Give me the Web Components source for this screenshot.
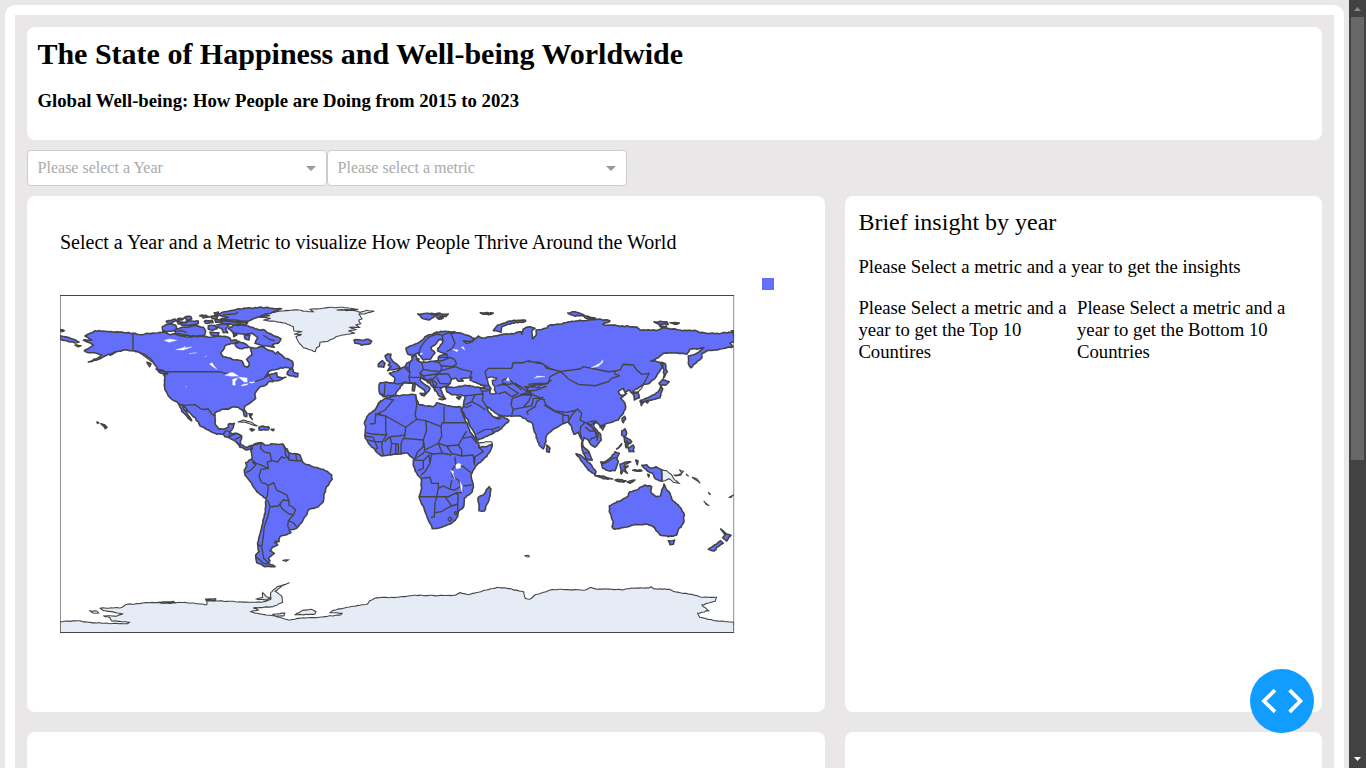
<!DOCTYPE html>
<html lang="en">
<head>
<meta charset="utf-8">
<title>The State of Happiness and Well-being Worldwide</title>
<style>
html, body { margin: 0; height: 100%; overflow: hidden; }
body { font-family: "Liberation Serif", "Times New Roman", serif; color: #000; background: #e9e7e8; }
</style>
</head>
<body>
<dash-app></dash-app>
<script>
function define(name, html, setup) {
  const tpl = document.createElement('template');
  tpl.innerHTML = html;
  customElements.define(name, class extends HTMLElement {
    constructor() {
      super();
      this.attachShadow({ mode: 'open' }).append(tpl.content.cloneNode(true));
    }
    connectedCallback() { if (setup) setup(this.shadowRoot, this); }
  });
}

define('page-card', `<style>
:host { display: block; box-sizing: border-box; background: #fff; border-radius: 8px; min-width: 0; }
</style><slot></slot>`);

define('page-header', `<style>
:host { display: block; height: 113px; }
page-card { height: 100%; padding: 10px 10.4px; }
h1 { margin: 0; font-size: 30px; line-height: 34px; }
h3 { margin: 19px 0 0; font-size: 18.72px; line-height: 22px; }
</style><page-card><h1><slot name="title"></slot></h1><h3><slot></slot></h3></page-card>`);

define('drop-down', `<style>
:host { display: flex; box-sizing: border-box; width: 300px; height: 36px; border: 1px solid #ccc; border-radius: 4px; background: #fff; color: #aaa; font-size: 16px; line-height: 34px; padding: 0 10px 0 9.6px; justify-content: space-between; align-items: center; }
i { border: 5px solid transparent; border-top-color: #999; border-bottom: 0; margin-top: 1px; }
</style><span><slot></slot></span><i></i>`);

define('insight-panel', `<style>
:host { display: block; font-size: 18.72px; line-height: 22px; }
page-card { height: 100%; padding: 12px 13.4px; }
h2 { font-size: 24px; line-height: 28px; font-weight: 400; margin: 0 0 20px; }
p { margin: 0; }
.cols { display: grid; grid-template-columns: 211px 214px; column-gap: 7.6px; margin-top: 19px; }
</style><page-card><h2>Brief insight by year</h2><p>Please Select a metric and a year to get the insights</p>
<div class="cols"><p>Please Select a metric and a year to get the Top 10 Countires</p><p>Please Select a metric and a year to get the Bottom 10 Countries</p></div></page-card>`);

define('map-panel', `<style>
:host { display: block; }
page-card { height: 100%; padding: 35px 33px 0; }
.title { font-size: 20px; line-height: 23px; white-space: nowrap; }
.plot { display: flex; margin-top: 23px; gap: 26.5px; }
world-map { margin-top: 18px; }
.key { width: 12.5px; height: 12.5px; background: #636efa; margin-top: .5px; }
</style><page-card><div class="title">Select a Year and a Metric to visualize How People Thrive Around the World</div>
<div class="plot"><world-map></world-map><div class="key"></div></div></page-card>`);

/* Survey sheets: every point is given on a local grid and moved to map space by its sheet's origin. */
const SHEET = { a: [55, 290, 3, 3], b: [215, 430, 3, 3], c: [355, 300, 3, 3], d: [355, 400, 3, 3], e: [500, 305, 3, 3], f: [550, 410, 3, 3], g: [55, 570, 2.272, 3], h: [155, 298, 3, 3], k: [250, 295, 3, 3] };
let seed = 11;
const rnd = () => ((seed = (seed * 16807) % 2147483647) / 2147483647) - 0.5;
function trace(src, closed, rough) {
  let s, pts = [];
  for (const t of src.trim().split(/\s+/)) {
    if (SHEET[t]) { s = SHEET[t]; continue; }
    const [x, y] = t.split(',').map(Number);
    pts.push([s[0] + x / s[2], s[1] + y / s[3]]);
  }
  if (closed) pts.push(pts[0]);
  let out = 'M' + pts[0].map(v => v.toFixed(1)).join();
  for (let i = 1; i < pts.length; i++) {
    const [p, q] = [pts[i - 1], pts[i]], d = Math.hypot(q[0] - p[0], q[1] - p[1]), n = rough && p[1] < 630 ? Math.floor(d / 2) : 0;
    for (let j = 1; j < n; j++) {
      out += 'L' + (p[0] + (q[0] - p[0]) * j / n + rnd() * rough).toFixed(1) + ',' + (p[1] + (q[1] - p[1]) * j / n + rnd() * rough).toFixed(1);
    }
    out += 'L' + q.map(v => v.toFixed(1)).join();
  }
  return out + (closed ? 'Z' : '');
}
const rows = s => s.trim().split('\n').filter(Boolean);

const PALE = rows(`
k 28,66 60,62 40,58 80,50 95,48 140,44 165,49 190,50 180,43 205,41 240,37 290,38 325,43 260,45 315,47 330,52 350,46 373,49 340,57 327,57 336,72 326,75 332,86 318,90 328,97 300,97 318,104 295,108 315,114 290,118 262,124 235,138 210,142 208,154 200,158 196,170 160,158 145,140 138,125 155,118 132,118 153,110 132,108 130,95 105,84 75,79 40,76 62,70
g 11,155 50,152 75,157 120,160 165,161 169,157 128,152 125,143 110,137 140,139 155,131 110,122 103,115 150,113 160,104 200,99 240,97 300,98 345,104 345,92 370,93 400,94 440,97 470,97 490,88 490,68 505,50 533,38 515,48 500,64 515,78 517,97 495,110 450,114 462,120 445,125 455,130 500,138 530,150 560,144 600,142 650,134 652,130 625,128 630,122 660,113 710,102 715,92 730,83 780,82 815,76 870,77 910,76 920,68 940,74 980,60 1005,52 1025,54 1065,66 1068,85 1078,88 1090,75 1110,67 1125,60 1150,58 1205,60 1217,52 1230,58 1260,57 1290,60 1310,54 1350,54 1354,50 1360,56 1395,58 1410,66 1450,74 1470,82 1503,82 1500,94 1470,105 1485,122 1460,130 1465,142 1500,152 1543,157 1543,192 11,192
g 546,134 565,120 582,118 593,125 590,133
g 495,133 522,129 520,138 500,138
g 458,87 472,82 472,68 480,80 490,84 480,90
g 80,123 95,123 99,129 86,129
g 235,96 270,94 272,99 240,100
g 342,87 365,86 365,91 343,91
f 335,179 350,182 362,192 370,205 387,220 370,217 357,206 345,212 335,214
d 335,94 350,110 368,128 410,125 412,138 380,146 350,120
e 392,262 400,248 425,240 432,234 425,250 413,262 400,263
a 548,396 565,390 585,395 608,408 588,403 570,397
a 683,474 697,476 700,488 706,494 700,510 690,500
f 371,195 385,194 395,190 388,179 400,184 392,196 378,198
f 408,192 416,199 411,196
f 426,202 440,206 451,220 444,214 434,208
f 475,246 482,254 478,252
f 461,273 478,287 468,283
f 538,262 551,254 543,263
b 202,391 220,390 213,394
c 510,767 522,767 522,771 514,770
`);

const LAND = rows(`
a 90,138 100,132 120,122 150,124 175,126 200,126 234,130 260,134 275,130 300,130 325,126 345,134 362,132 380,138 410,141 440,138 470,142 495,138 520,142 528,152 545,150 548,160 530,160 510,167 505,180 497,188 505,200 520,203 540,210 560,212 567,228 578,232 583,218 575,208 590,195 588,182 585,172 600,175 620,170 635,178 650,182 662,192 668,185 680,195 690,205 705,210 714,218 712,235 690,232 665,238 640,245 630,262 650,252 665,248 668,262 692,262 670,272 640,276 630,287 615,290 605,302 600,310 602,325 590,335 570,348 568,360 576,370 575,380 568,378 562,360 550,352 530,352 520,358 500,358 480,368 480,385 482,405 492,418 505,418 520,412 520,403 538,400 535,412 525,425 530,432 545,430 560,438 556,455 558,465 575,473 590,466 592,478 575,480 555,472 543,455 530,448 510,440 505,432 485,433 460,420 435,408 430,395 415,380 400,365 388,350 384,345 385,352 395,368 405,382 410,392 400,385 385,368 375,352 368,338 350,328 340,318 330,300 328,285 330,262 325,252 335,247 310,240 300,225 290,210 275,198 255,188 238,182 215,180 190,184 165,196 180,185 150,198 130,208 100,216 125,206 140,195 125,190 100,188 88,182 105,172 115,165 95,155 85,150 110,150
h 60,95 85,88 120,82 145,88 152,100 148,112 120,114 95,112 62,107
h 22,86 40,79 62,82 66,92 50,100 24,100
h 220,92 235,82 255,78 280,84 300,92 330,97 348,108 378,123 370,136 352,140 358,148 338,144 318,142 300,136 308,118 290,106 262,108 235,104
h 185,50 205,42 225,38 262,32 320,28 380,32 358,42 320,52 278,70 240,72 215,66 190,66 220,58
h 205,68 235,72 278,74 272,82 235,80 200,76
h 34,70 60,63 66,68 50,75 36,75
h 62,66 80,72 95,74 70,78
h 68,62 88,60 80,66
h 90,57 108,56 110,63 95,66
h 75,76 100,70 130,69 130,76 100,82 80,82
h 134,53 152,52 164,57 145,60
h 148,70 172,67 174,74 152,76
h 168,55 188,54 186,62 170,60
h 160,84 180,82 186,92 172,97 160,94
h 186,80 205,77 222,80 212,92 218,104 205,104 200,92 188,88
h 165,102 192,104 188,114 168,110
h 180,66 200,66 196,74 182,73
h 178,44 190,42 188,50 180,50
h 240,136 252,130 275,140 282,147 262,152 246,148
h 268,113 285,112 282,126 270,122
h 234,104 246,110 236,116
a 696,252 706,236 714,238 715,246 729,250 728,260 710,258
a 276,217 288,222 284,230
a 303,237 320,240 338,250 332,254 312,246
a 16,137 30,140 55,148 72,156 60,159 35,152 16,148
a 15,119 28,122 20,125
a 612,412 625,408 643,413 640,420 612,420
a 585,417 598,419 590,423
a 648,418 657,418 655,422
a 582,371 592,372 586,380 592,388 586,382
a 126,396 131,398 128,400
a 137,401 148,404 156,412 151,416 146,408
a 60,165 78,167 70,170
b 108,52 118,42 140,38 150,45 175,42 203,42 210,58 222,68 255,75 262,95 270,102 300,112 325,118 350,135 352,148 335,170 328,190 325,215 310,230 280,240 272,258 260,278 245,295 222,300 228,308 195,320 192,335 180,336 188,345 172,352 165,362 178,370 160,385 165,392 160,400 180,410 150,410 125,398 122,375 132,365 128,345 140,290 148,260 153,205 125,185 110,160 90,135 88,120 95,108 92,98 110,88 110,70
c 75,248 95,246 117,250 120,235 103,220 125,214 135,208 150,200 155,190 165,185 172,180 170,170 182,165 188,182 200,188 230,184 250,182 250,172 262,165 275,162 262,158 248,152 248,145 262,130 264,122 256,118 238,136 228,142 230,150 240,158 225,178 205,180 192,165 190,158 170,165 158,162 153,145 175,135 195,125 210,110 240,98 270,94 300,96 335,105 358,115 350,125 325,122 335,130 355,122 370,108 385,115 400,110 430,106 450,102 480,100 500,95 e 65,88 70,72 90,65 105,70 95,80 98,102 108,92 108,75 140,70 145,62 180,58 210,50 270,45 300,42 330,48 308,58 350,62 410,66 425,76 475,75 490,68 540,75 590,78 600,83 645,86 700,82 702,110 690,115 699,125 660,132 620,138 605,146 606,158 590,172 572,188 565,175 565,153 590,145 612,128 595,132 570,132 560,148 530,143 490,145 475,158 452,168 480,172 487,185 478,200 465,220 445,236 432,238 420,245 400,258 398,262 413,262 418,278 403,285 400,268 388,255 375,262 370,250 355,260 365,272 380,265 362,280 372,290 377,305 370,325 355,345 335,352 310,360 300,362 290,352 280,362 290,375 300,385 304,405 285,427 270,415 265,405 252,398 248,410 250,425 262,435 270,449 f 115,128 127,150 112,148 100,130 95,110 e 247,408 240,395 235,382 222,388 215,365 205,350 185,358 165,370 140,390 138,410 130,432 117,420 103,380 97,355 80,345 65,335 50,333 35,334 c 445,348 430,345 405,325 395,320 400,335 415,350 430,352 438,345 462,362 440,385 415,400 370,420 365,415 350,385 335,355 320,330 325,320 328,300 330,288 320,286 290,284 275,275 272,262 300,262 330,256 375,263 390,260 362,247 345,240 350,232 335,234 318,236 325,243 310,244 303,234 290,237 286,250 278,258 262,262 255,268 262,280 270,295 255,290 245,275 235,262 225,250 205,238 198,232 195,240 205,250 225,265 222,272 212,283 208,270 190,258 180,248 165,250 145,250 135,265 125,275 120,285 85,290 75,282 72,265
c 90,168 98,162 108,163 106,172 118,188 128,195 136,205 115,209 98,212 108,200 100,195 105,188 95,180
c 70,192 82,182 90,190 86,202 70,200
c 195,280 212,280 208,288
c 174,252 180,252 178,273 172,272
c 305,292 318,290 312,298
c 252,297 272,296 262,299
c 184,178 192,176 190,184
c 188,42 215,40 250,45 235,52 222,60 205,56
c 228,40 280,42 272,50 250,47
c 245,52 265,53 252,58
c 376,38 415,39 408,43 385,43
c 415,92 428,75 465,63 510,60 512,64 470,70 440,80 438,97
c -3,120 20,121 40,118 50,124 45,131 20,136 0,130
e 203,24 225,20 252,30 225,34
e 250,33 285,38 278,44 258,40
e 462,50 500,50 505,58 480,58
e 478,62 500,64 485,68
e 510,53 538,54 530,58
e 694,77 705,77 700,79
e 485,172 496,176 497,192 502,200 490,220 492,195
e 477,235 487,224 508,230 500,238 482,242
e 482,242 488,252 480,278 465,283 445,286 430,292 422,286 450,275 465,268 478,255
e 420,288 430,292 424,302
e 436,288 448,286 442,294
e 366,340 374,334 377,342 370,353
e 365,378 375,371 380,385 372,396 365,390
e 372,396 385,402 395,410 390,416 380,408 385,420 374,412
e 385,430 400,420 402,440 388,440
e 376,418 384,426 378,428
e 350,432 365,416 362,422
e 300,366 315,362 308,375
e 140,420 150,430 148,442 140,440
c 92,295 120,288 155,285 182,284 185,300 190,312 215,318 235,320 245,308 270,315 300,320 318,322 320,335 d 335,68 345,95 360,115 370,130 372,143 395,140 412,132 408,148 395,170 370,190 355,210 348,225 355,255 352,275 328,295 325,322 310,335 308,350 290,370 260,382 232,386 225,370 210,335 192,290 200,265 198,235 180,212 175,190 178,178 165,168 158,160 140,160 110,165 80,168 60,150 42,132 30,110 32,80 28,70 40,45 60,30 70,10
d 370,292 385,285 402,260 408,268 402,300 388,333 372,332
f 178,288 192,280 215,270 235,258 240,245 260,240 270,232 285,225 305,230 303,248 320,260 332,258 335,240 342,222 350,240 360,250 365,268 385,285 402,310 402,335 385,360 380,375 355,380 330,375 318,362 310,350 290,342 250,345 225,352 195,358 186,350 190,335 178,305
f 355,392 374,390 370,403 360,404
f 512,357 525,368 543,376 530,393 518,383 525,375
f 475,418 500,402 512,392 520,400 500,412 492,423
f 78,131 90,134 120,160 138,185 135,195 115,180 100,160
f 135,197 160,198 188,207 160,206
f 152,156 165,155 185,140 195,125 208,130 200,145 205,155 195,182 175,182 158,175
f 210,162 225,157 242,155 225,163 222,170 235,168 225,175 232,190 220,180 214,192
f 257,150 264,152 262,164
f 248,181 270,179 276,182 260,184
f 195,210 210,209 228,212 220,217
f 232,216 255,210 240,220
f 275,166 290,164 296,172 310,174 318,170 335,179 335,214 318,208 308,190 292,183
f 293,193 298,195 296,201
`);

const BORDER = rows(`
a 234,130 234,182 248,184 265,196 292,216
a 335,245 495,245 510,250 525,250
a 600,275 628,265 640,250 648,266 655,272
a 370,342 385,346 420,344 440,358 460,357 470,372 480,378
a 505,432 512,422 525,425
a 525,425 522,440 545,430
a 540,448 558,440
a 542,456 557,466
a 592,466 610,462 620,458
b 140,38 136,55 148,66 165,70 170,92 157,96 160,115 135,104 112,96
b 112,96 122,106 105,122 92,128
b 160,115 138,118 132,140 140,158 150,160 160,166 158,190 154,206
b 160,166 176,158 185,180 215,195 222,212 205,210 195,222 190,228 165,230 158,210
b 165,230 158,260 148,290 145,320 140,350 146,385 160,398
b 195,222 200,235 222,252 235,255 242,240 232,230 222,225 222,212
b 235,255 220,272 218,288 224,298
b 220,272 235,278 245,290
b 170,92 188,96 200,80 207,85 215,80
b 203,42 212,55 210,70 222,90 245,92 262,92
b 222,68 222,90
b 242,72 245,90
b 110,88 125,102
b 165,70 168,82
b 128,345 140,348
b 185,332 178,340
b 122,380 135,390 145,400 158,402
c 172,248 160,250 150,245 140,250 128,252 118,250
c 90,250 88,285 78,282
c 150,204 165,218 162,232 165,248
c 162,232 185,232 198,232
c 165,185 162,205 165,218
c 150,200 160,205
c 200,188 205,208 195,218 205,228 225,225 245,222 258,212 260,200 252,188 232,184
c 205,208 225,212 258,215
c 195,218 198,232
c 205,228 210,240 230,240 250,222
c 198,234 215,238 228,250
c 250,222 262,222 280,222 290,240
c 245,232 255,250 285,252
c 230,240 235,255 245,262 262,262
c 225,235 245,250 240,265
c 235,255 240,275
c 250,172 285,172 298,178 305,192 292,200 265,198 258,195
c 258,212 280,206 302,200 320,208 350,215 345,232
c 248,182 262,182 285,172
c 275,162 280,175
c 192,165 195,145 205,130 220,112 245,102 262,106
c 262,106 264,122
c 262,106 285,96 292,110 300,130 292,145 275,155
c 280,98 300,100
c 390,215 400,205 435,205 470,205 475,188 505,188 520,182 540,188 565,192 575,205 600,210 618,215
c 390,215 395,235
c 442,240 445,255 480,250 500,262 515,275 520,262
c 442,240 460,235 475,250 500,270
c 425,258 450,250 462,262 490,280 470,290
c 510,262 540,255 575,250 590,240
c 515,275 545,270 575,258
c 515,275 530,285 500,285 472,295 468,315 475,328 470,345
c 430,282 450,275 470,290
c 475,328 505,322 520,305 530,285
c 505,322 530,318 535,295 555,295 570,300
c 520,345 515,335 540,320 545,305 565,290
c 375,263 380,275 385,282 382,300 395,320
c 375,263 400,268
c 330,288 360,284 385,282
c 330,315 350,305 360,284
c 350,305 370,315 392,330
c 325,320 335,322 350,315
c 365,402 390,388 412,388 435,380
c 415,350 430,358 440,352
c 415,400 412,388
c 380,275 400,272 405,265
c 375,255 405,258
e 180,200 215,195 240,192 250,185 285,192 325,200 345,198 345,208 360,212
e 360,212 335,220 325,230 285,242 235,238 205,222 188,205 180,200
e 345,198 360,195 370,178 400,180 410,195 425,208 447,205 440,220 430,238
e 180,200 150,215 145,235 120,240 110,255 85,258
e 180,200 150,190 120,172 85,170
e 85,238 110,235 145,235
e 85,258 75,245 100,245 120,250
e 85,258 100,270 120,278 132,285 138,300 165,318 200,322 230,315
e 132,300 165,320 188,328 190,318
e 190,355 188,330 205,332 208,350
e 205,352 215,330 232,312 245,325 240,345 255,352
e 255,352 270,362 285,350
e 255,352 242,365 240,380 245,400
e 255,365 270,378 285,378 290,395 275,400 268,408
e 262,350 280,372 295,390 290,408
e 268,350 290,348
e 400,266 416,263
e 60,270 75,265 100,270
h 60,100 80,98 95,104
h 215,66 240,66 270,70
h 205,50 240,48 250,42
h 325,112 345,125 360,128
d 78,0 60,30
c 92,295 115,300 90,330 60,345
d 182,-12 185,15 180,45 185,58 152,82 92,48
d 92,48 92,95 95,105 50,102 32,98
d 60,42 92,48
d 45,72 60,70 62,42 78,42
d 267,20 267,68 335,68
d 267,68 262,68 258,80 212,62 185,58
d 212,62 215,90 205,120 148,115 150,100 152,82
d 152,82 150,105 130,108 105,110 88,125
d 138,165 138,130 145,115
d 205,120 205,140 188,155 180,175
d 258,80 260,108 250,130 210,150 205,160 178,178
d 205,120 210,150
d 250,130 275,138 310,135 322,115 330,100 335,94
d 275,138 290,160 320,168 355,165
d 310,135 320,150 320,168
d 250,130 262,160 290,165
d 210,155 235,162 262,160 290,165
d 322,115 350,110 365,130
d 370,140 385,155 360,170 358,195
d 355,165 358,195
d 300,170 302,195 325,200 350,220
d 302,195 290,210 292,230 310,240
d 198,235 225,232 230,250 250,250 250,265 245,290 192,290
d 178,180 205,182 205,205 188,212
d 205,182 222,165 225,190 210,215 198,225
d 230,162 225,190
d 250,265 265,258 285,268 290,240
d 285,268 300,270 318,258 310,240
d 245,290 280,290 305,278 320,278
d 245,290 240,310 238,350 228,352
d 245,290 270,290 290,318 275,325 260,335 240,338
d 290,318 308,312 310,285 300,278
d 308,312 308,335
d 318,258 325,275
d 325,258 350,255
d 105,110 110,130 105,165
d 110,130 130,132 130,162
d 122,132 122,162
d 95,105 82,125 80,140 85,165
d 82,125 60,125 40,120
d 60,125 68,145 60,150
d 30,108 55,112 60,125
d 278,355 285,351 291,357 285,363 278,358
d 298,335 306,336 305,344 299,343 298,336
f 155,162 175,155 188,145 200,143
f 335,179 335,214
f 100,130 112,128
f 308,348 318,358
`);

/* Inland water */
const LAKES = rows(`
a 510,256 525,248 535,248 550,258 530,259
a 533,268 548,264 540,275 541,286 533,285
a 550,261 576,264 577,276 568,276
a 558,288 565,283 580,281 575,285
a 582,277 600,275 590,280
a 328,151 345,147 365,151 342,157
a 362,179 385,173 390,168 388,174 410,171 385,180
a 402,191 425,188
a 463,222 472,218 475,225 486,238 476,232
a 449,201 455,197
a 392,289 396,291
d 302,195 310,190 318,193 316,204 304,206
c 292,148 310,150 306,155
c 319,142 325,140 329,150
c 195,161 203,159 198,165
c 453,240 460,232 464,243
e 274,188 290,180 302,173 308,164 308,172 295,184
e 103,220 112,213 135,215 112,217
d 287,210 296,215 294,222 300,238
d 315,245 321,257 322,275 318,268
c 343,248 350,246
`);

define('world-map', `<style>
:host { display: block; flex: none; width: 675px; height: 338px; overflow: hidden; }
svg { display: block; }
.pale { fill: #e5ecf6; stroke: #444; stroke-width: 1.1; }
.land { fill: #636efa; stroke: #444; stroke-width: 1.6; stroke-linejoin: round; }
.line { fill: none; stroke: #444; stroke-width: 1.35; }
.lake { fill: #fff; stroke: #fff; stroke-width: .35; }
.sea { fill: #fff; stroke: #444; stroke-width: 1.4; }
</style><svg width="675" height="338" viewBox="60 295 675 338">
<defs><clipPath id="box"><path d="M60 295H734V633H60Z"/></clipPath></defs>
<g clip-path="url(#box)"><path class="pale"/><path class="land"/><path class="line"/><path class="sea"/><path class="lake"/></g>
<path d="M60 295.5H734M60 632.5H734" stroke="#444"/><path d="M60.5 295V633M733.7 295V633" stroke="#444" stroke-width=".6"/></svg>`, root => {
  const put = (cls, list, closed, rough) => root.querySelector('.' + cls).setAttribute('d', list.map(r => trace(r, closed, rough)).join(''));
  put('pale', PALE, true, 0.7);
  put('land', LAND, true, 1.1);
  put('line', BORDER, false, 0);
  put('sea', ['c 395,235 410,230 425,235 422,240 412,241 413,252 420,262 418,270 425,280 410,282 404,278 408,265 400,252'], true, 0.6);
  put('lake', LAKES, true, 0);
});

define('code-button', `<style>
:host { display: block; position: absolute; left: 1250px; top: 669px; width: 64px; height: 64px; border-radius: 50%; background: #119dff; }
svg { display: block; }
</style><svg width="64" height="64" fill="none" stroke="#fff" stroke-width="3.8"><path d="M25 21.2L14 32L25 42.8M39.6 21.2L50.4 32L39.6 42.8"/></svg>`);

define('scroll-rail', `<style>
:host { display: flex; flex-direction: column; align-items: center; box-sizing: border-box; width: 17px; height: 768px; background: #424242; }
svg { display: block; flex: none; }
.thumb { width: 13px; height: 443px; background: #686868; }
.space { flex: 1; }
</style><svg width="17" height="17"><path d="M5 11L8.5 7L12 11Z" fill="#8a8a8a"/></svg><div class="thumb"></div><div class="space"></div><svg width="17" height="17"><path d="M5 6H12L8.5 10Z" fill="#fff"/></svg>`);

define('dash-app', `<style>
:host { display: flex; height: 768px; overflow: hidden; }
.page { flex: 1; padding: 5px 5px 0; box-sizing: border-box; min-width: 0; }
.frame { border: 10px solid #fff; border-radius: 10px; height: 900px; box-sizing: border-box; padding: 12px; background: #e9e7e8; background-clip: padding-box; }
.filters { display: flex; margin: 10px 0; }
.grid { display: grid; grid-template-columns: 798px 477px; grid-template-rows: 516px 200px; gap: 20px; }
</style><div class="page"><div class="frame">
<page-header><span slot="title">The State of Happiness and Well-being Worldwide</span>Global Well-being: How People are Doing from 2015 to 2023</page-header>
<div class="filters"><drop-down>Please select a Year</drop-down><drop-down>Please select a metric</drop-down></div>
<div class="grid"><map-panel></map-panel><insight-panel></insight-panel><page-card></page-card><page-card></page-card></div>
</div></div><scroll-rail></scroll-rail><code-button></code-button>`);
</script>
</body>
</html>
